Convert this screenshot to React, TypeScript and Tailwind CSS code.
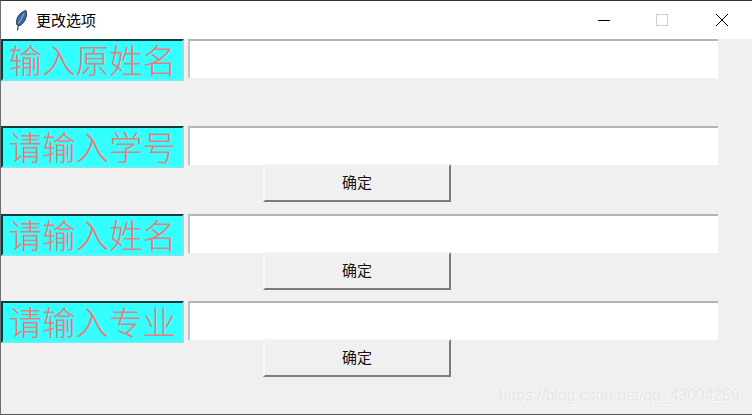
import React from 'react';

const rows = [
  { label: '输入原姓名', button: false, height: 'h-[87px]' },
  { label: '请输入学号', button: true, height: 'h-[88px]' },
  { label: '请输入姓名', button: true, height: 'h-[87px]' },
  { label: '请输入专业', button: true, height: 'h-[74px]' },
];

function Feather() {
  return (
    <svg width="13" height="21" viewBox="0 0 13 21" className="shrink-0">
      <path d="M2.5 20.5 L3.5 14" stroke="#4a4a4a" strokeWidth="1.3" fill="none" />
      <path d="M2 15 C0 9 4.5 2 11 0.5 C12.8 6 10 12.5 5 15.5 Z" fill="#3a6aa6" stroke="#2c3848" strokeWidth="1" />
      <path d="M3.5 13.5 L9 3.5" stroke="#9cbfe6" strokeWidth="1" fill="none" />
    </svg>
  );
}

function Row({ label, button, height }: { label: string; button: boolean; height: string }) {
  return (
    <div className={`flex items-start ${height}`}>
      <div className="w-[183px] h-[42px] shrink-0 bg-[#33ffff] border-2 border-t-[#123c3c] border-l-[#123c3c] border-r-[#66f0f0] border-b-[#66f0f0] flex items-center justify-center pb-[3px] text-[33.5px] leading-none text-[#f07a7a] font-light font-['Noto_Sans_CJK_SC',serif] whitespace-nowrap">
        {label}
      </div>
      <div className="ml-[4px] w-[530px]">
        <div className="h-[39px] bg-white border-t-2 border-l-2 border-t-[#b4b4b4] border-l-[#c4c4c4]" />
        {button && (
          <button className="block -mt-px ml-[75px] w-[188px] h-[38px] pb-[3px] bg-[#f0f0f0] border-2 border-t-[#f4f4f4] border-l-[#f8f8f8] border-r-[#7c7c7c] border-b-[#7c7c7c] text-[15px] leading-none text-[#111] font-['Noto_Sans_CJK_SC',sans-serif]">
            确定
          </button>
        )}
      </div>
    </div>
  );
}

export default function App() {
  return (
    <div className="relative w-[752px] h-[415px] bg-[#f0f0f0] border-t border-t-[#333] border-l border-l-[#6e6e6e] border-b border-b-[#555] overflow-hidden">
      <div className="h-[38px] bg-white flex items-center">
        <div className="ml-[14px] w-[21px]">
          <Feather />
        </div>
        <span className="text-[15px] text-black font-['Noto_Sans_CJK_SC',sans-serif]">更改选项</span>
        <div className="ml-auto flex items-center">
          <div className="w-[12px] h-px bg-black mr-[46px]" />
          <div className="w-[12px] h-[12px] border border-[#cfcfcf] mr-[47px]" />
          <svg width="14" height="14" viewBox="0 0 14 14" className="mr-[23px]">
            <path d="M1 1 L13 13 M13 1 L1 13" stroke="#000" strokeWidth="1" />
          </svg>
        </div>
      </div>
      {rows.map((r) => (
        <Row key={r.label} label={r.label} button={r.button} height={r.height} />
      ))}
      <span className="absolute left-[498px] top-[383px] text-[15.7px] text-[#e6e6e6] font-['Liberation_Sans',sans-serif] [text-shadow:1px_1px_0_#fafafa] whitespace-nowrap">
        https://blog.csdn.net/qq_43004259
      </span>
    </div>
  );
}
